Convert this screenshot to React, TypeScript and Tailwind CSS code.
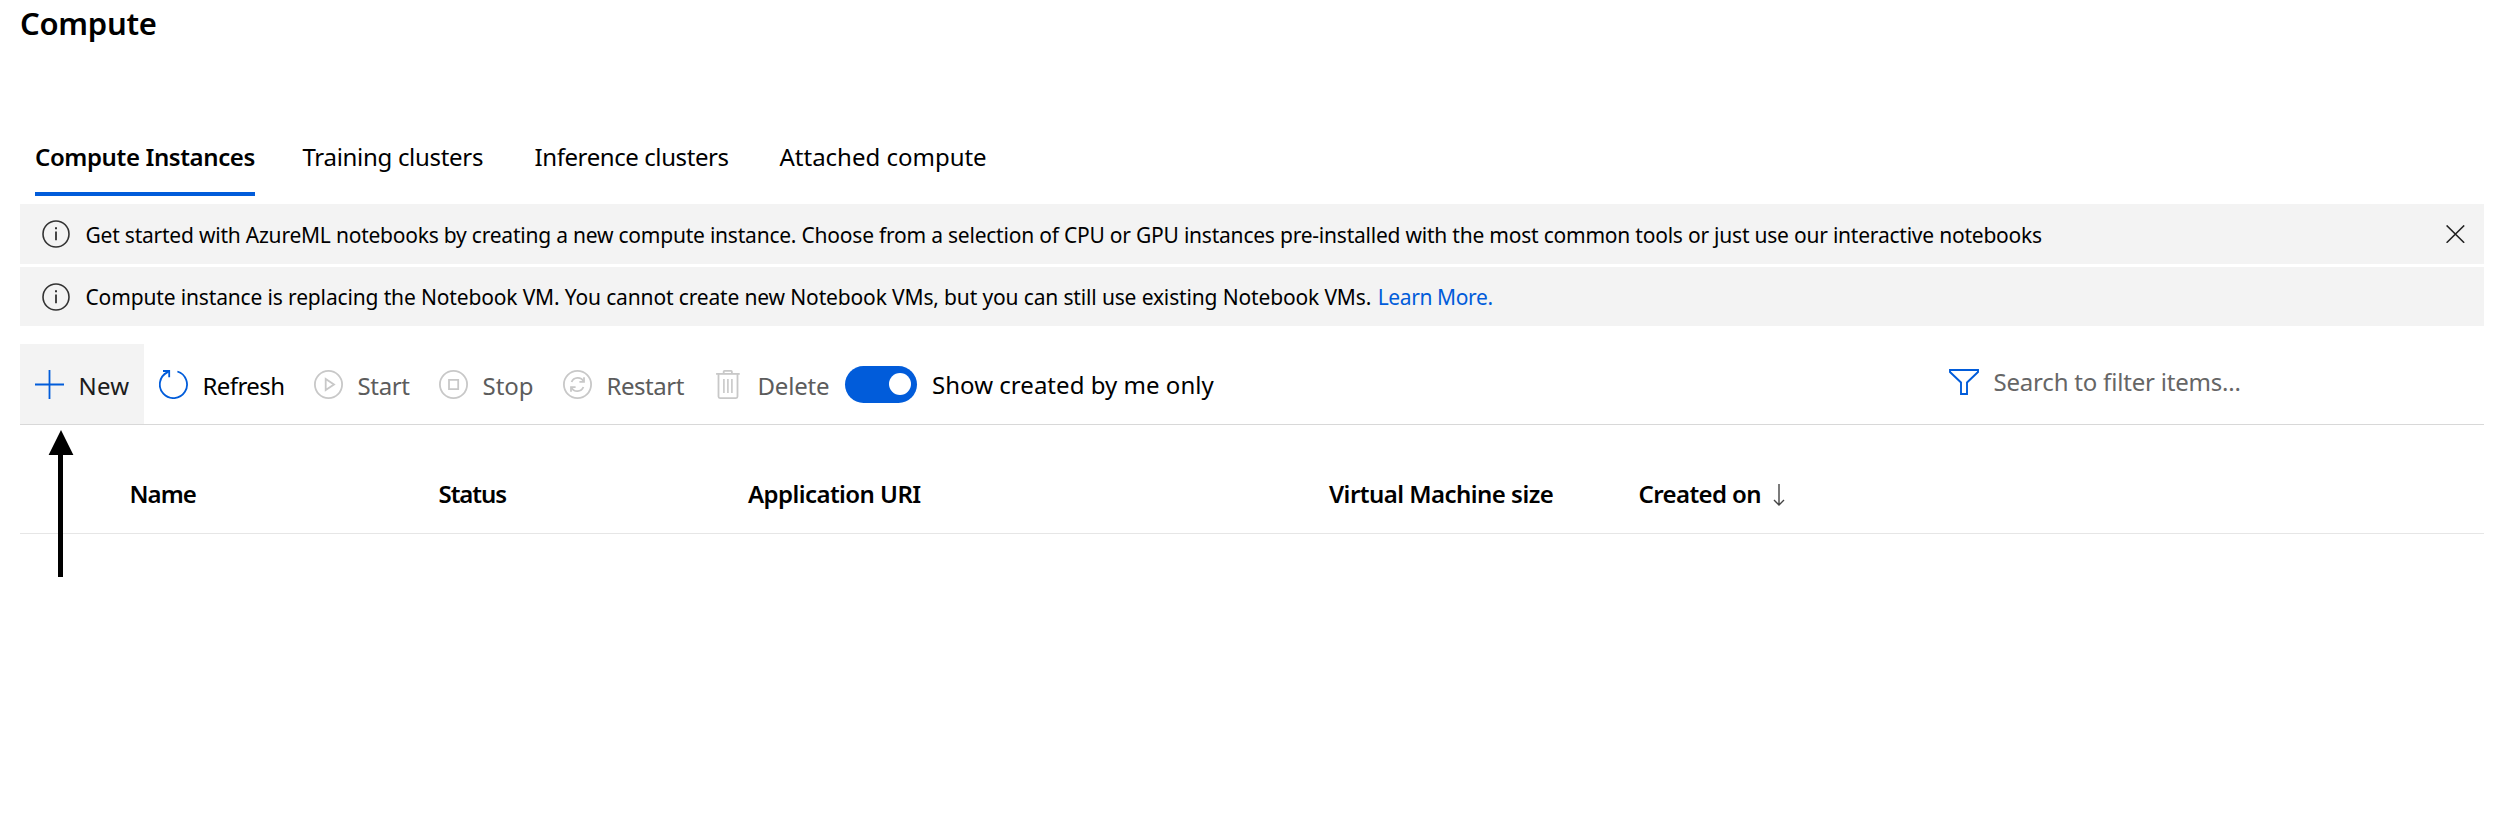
import type { ReactNode } from "react";

const tabs = [
  { label: "Training clusters", cls: "w-[232px] tracking-[-0.3px]" },
  { label: "Inference clusters", cls: "w-[245px] tracking-[-0.41px]" },
  { label: "Attached compute", cls: "w-[240px] tracking-[-0.01px]" },
];

function InfoIcon() {
  return (
    <svg className="size-[28px] shrink-0" viewBox="0 0 28 28" fill="none" stroke="#333333">
      <circle cx="14" cy="14" r="13" strokeWidth="1.6" />
      <path d="M14 11.6V20.2" strokeWidth="1.8" />
      <path d="M14 7.2V9.2" strokeWidth="2" />
    </svg>
  );
}

function PlusIcon() {
  return (
    <svg className="size-[29px]" viewBox="0 0 29 29" fill="none" stroke="#015cda" strokeWidth="1.8">
      <path d="M14.5 0V29M0 14.5H29" />
    </svg>
  );
}

function RefreshIcon() {
  return (
    <svg className="size-[29px]" viewBox="0 0 29 29" fill="none" stroke="#015cda" strokeWidth="1.8">
      <path d="M18.4 1.5A13.6 13.6 0 1 1 8.2 2.4L10 1.3" />
      <path d="M4 1H10.2V7.2" />
    </svg>
  );
}

function StartIcon() {
  return (
    <svg className="size-[29px]" viewBox="0 0 29 29" fill="none" stroke="#c8c8c8" strokeWidth="1.8">
      <circle cx="14.5" cy="14.5" r="13.6" />
      <path d="M11.7 9V20L20 14.5Z" />
    </svg>
  );
}

function StopIcon() {
  return (
    <svg className="size-[29px]" viewBox="0 0 29 29" fill="none" stroke="#c8c8c8" strokeWidth="1.8">
      <circle cx="14.5" cy="14.5" r="13.6" />
      <path d="M10 9.9H19.2V19.1H10Z" />
    </svg>
  );
}

function RestartIcon() {
  return (
    <svg className="size-[29px]" viewBox="0 0 29 29" fill="none" stroke="#c8c8c8" strokeWidth="1.8">
      <circle cx="14.5" cy="14.5" r="13.6" />
      <path d="M8.6 12A6.6 6.6 0 0 1 20.6 11.4" />
      <path d="M21 7.2V11.8H16.4" />
      <path d="M20.4 17A6.6 6.6 0 0 1 8.4 17.6" />
      <path d="M8 21.8V17.2H12.6" />
    </svg>
  );
}

function DeleteIcon() {
  return (
    <svg className="size-[29px]" viewBox="0 0 29 29" fill="none" stroke="#c8c8c8" strokeWidth="1.8">
      <path d="M2.1 3.9H25.7" />
      <path d="M9.7 3.6V1.7Q9.7 0.9 10.5 0.9H17.1Q17.9 0.9 17.9 1.7V3.6" />
      <path d="M4.5 4V26.6Q4.5 28.1 6 28.1H22Q23.5 28.1 23.5 26.6V4" />
      <path d="M9.9 9V23M13.9 9V23M17.9 9V23" strokeWidth="1.6" />
    </svg>
  );
}

function Command({ icon, label, cls }: { icon: ReactNode; label: string; cls: string }) {
  return (
    <button className={`flex h-[80px] shrink-0 items-center gap-[14.5px] pl-[15px] text-left whitespace-nowrap ${cls}`}>
      {icon}
      <span className="pt-[3px]">{label}</span>
    </button>
  );
}

export default function App() {
  return (
    <div className="relative h-[838px] w-[2504px] overflow-hidden bg-white pr-[20px] pl-[20px] font-['Noto_Sans','Open_Sans',sans-serif] text-[24px] leading-[32px] text-black">
      <h1 className="h-[140px] pt-[3px] text-[31px] leading-[40px] font-semibold tracking-[-0.28px]">Compute</h1>

      <nav className="flex h-[56px] pl-[15px] whitespace-nowrap">
        <a className="mr-[47.5px] h-[56px] w-[220px] border-b-4 border-[#015cda] pt-px font-semibold tracking-[-0.39px]">
          Compute Instances
        </a>
        {tabs.map((t) => (
          <a key={t.label} className={`pt-px ${t.cls}`}>
            {t.label}
          </a>
        ))}
      </nav>

      <div className="mt-[8px] flex h-[60px] items-center bg-[#f3f3f3] pr-[19px] pl-[22px] text-[21px] whitespace-nowrap">
        <InfoIcon />
        <span className="ml-[15.5px] pt-[2px] tracking-[-0.22px]">
          Get started with AzureML notebooks by creating a new compute instance. Choose from a selection of CPU or GPU
          instances pre-installed with the most common tools or just use our interactive notebooks
        </span>
        <svg className="ml-auto h-[18px] w-[19px]" viewBox="0 0 19 18" fill="none" stroke="#222222" strokeWidth="1.5">
          <path d="M0.6 0.4L18.2 17.8M18.2 0.4L0.6 17.8" />
        </svg>
      </div>
      <div className="mt-[3px] flex h-[59px] items-center bg-[#f3f3f3] pl-[22px] text-[21px] whitespace-nowrap">
        <InfoIcon />
        <span className="ml-[15.5px] pt-px tracking-[-0.148px]">
          Compute instance is replacing the Notebook VM. You cannot create new Notebook VMs, but you can still use
          existing Notebook VMs.
        </span>
        <a className="ml-[6.5px] pt-px tracking-[-0.38px] text-[#015cda]">Learn More.</a>
      </div>

      <div className="mt-[18px] flex h-[81px] items-center border-b border-[#d8d8d8]">
        <Command icon={<PlusIcon />} label="New" cls="w-[124px] bg-[#f3f3f3] text-[#1c1c1c] tracking-[0.2px]" />
        <Command icon={<RefreshIcon />} label="Refresh" cls="w-[155px] tracking-[-0.58px]" />
        <Command icon={<StartIcon />} label="Start" cls="w-[125px] text-[#5c5c5c] tracking-[-0.35px]" />
        <Command icon={<StopIcon />} label="Stop" cls="w-[124px] text-[#5c5c5c]" />
        <Command icon={<RestartIcon />} label="Restart" cls="w-[151px] text-[#5c5c5c] tracking-[-0.45px]" />
        <Command icon={<DeleteIcon />} label="Delete" cls="w-[146px] text-[#5c5c5c] tracking-[-0.18px]" />
        <button className="flex h-[37px] w-[72px] items-center justify-end rounded-full bg-[#015cda] pr-[6px]">
          <span className="size-[22px] rounded-full bg-white" />
        </button>
        <span className="ml-[15px] w-[1017px] pt-px tracking-[0.03px]">Show created by me only</span>
        <svg className="mb-[5px] h-[26px] w-[30px]" viewBox="0 0 30 26" fill="none" stroke="#015cda" strokeWidth="1.9">
          <path d="M1 3V1H29V3L18 13.5V25H12V13.5Z" />
        </svg>
        <span className="mb-[4px] ml-[14.5px] tracking-[-0.2px] text-[#666666]">Search to filter items...</span>
      </div>

      <div className="flex h-[109px] border-b border-[#e6e6e6] pt-[53px] pl-[109.5px] font-semibold whitespace-nowrap">
        <span className="w-[309px] tracking-[-0.95px]">Name</span>
        <span className="w-[309.5px] tracking-[-1.05px]">Status</span>
        <span className="w-[581px] tracking-[-0.56px]">Application URI</span>
        <span className="w-[309.5px] tracking-[-0.53px]">Virtual Machine size</span>
        <span className="w-[134px] tracking-[-0.6px]">Created on</span>
        <svg className="mt-[6px] h-[22px] w-[12px]" viewBox="0 0 12 22" fill="none" stroke="#444444" strokeWidth="1.4">
          <path d="M6 0V21M1 16L6 21L11 16" />
        </svg>
      </div>

      <svg className="absolute top-[430px] left-[48px] h-[147px] w-[26px]" viewBox="0 0 26 147" fill="#000000">
        <path d="M13 0L25.4 25H15V147H10V25H0.6Z" />
      </svg>
    </div>
  );
}
